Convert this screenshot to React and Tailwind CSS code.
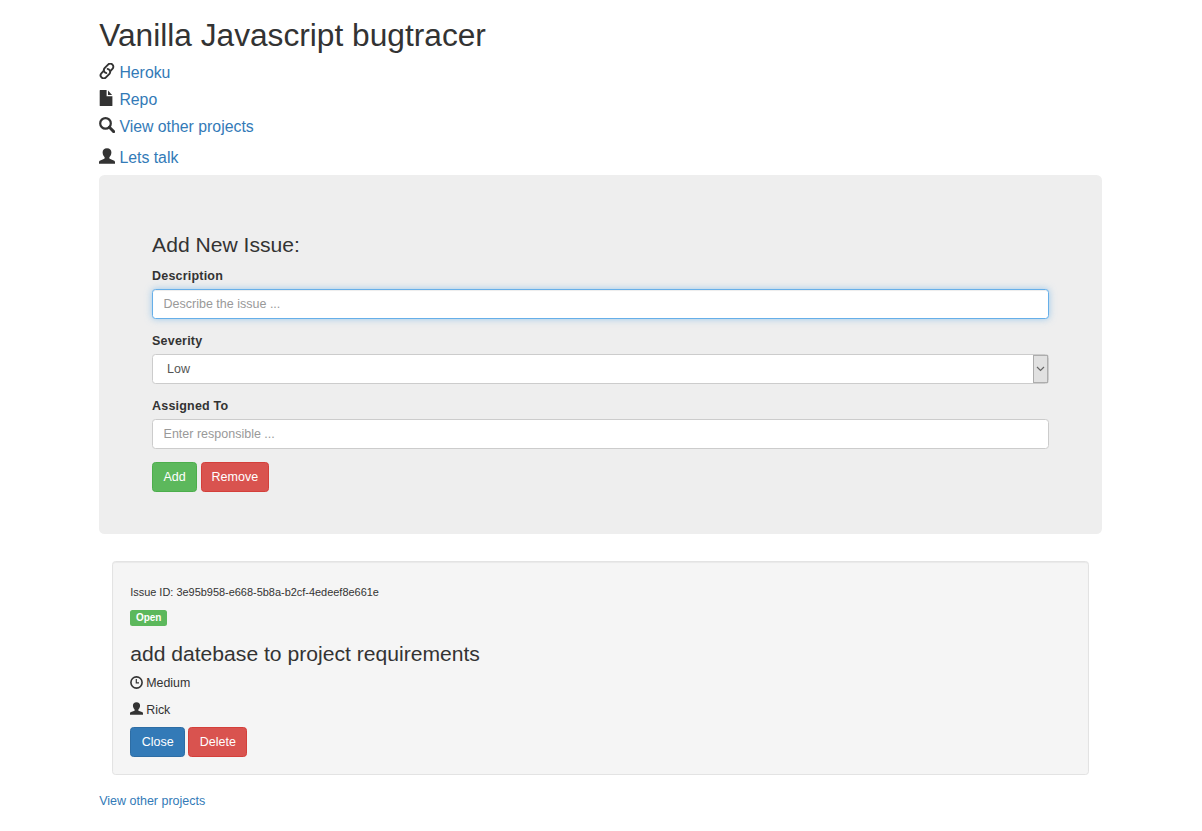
import React from 'react';

function LinkIcon() {
  return (
    <svg viewBox="0 0 16 16" className="h-4 w-4 shrink-0" fill="none" stroke="#333" strokeWidth="1.9">
      <g transform="rotate(-45 8 8)">
        <path d="M10.4 10.4H13.3A3.1 3.1 0 0 0 13.3 4.2H8.4A3.1 3.1 0 0 0 6.6 9.6" />
        <path d="M5.6 5.6H2.7A3.1 3.1 0 0 0 2.7 11.8H7.6A3.1 3.1 0 0 0 9.4 6.4" />
      </g>
    </svg>
  );
}

function FileIcon() {
  return (
    <svg viewBox="0 0 16 16" className="h-4 w-4 shrink-0" fill="#333">
      <path d="M1.2 0H7.6V6.2H13.4V15.4Q13.4 16 12.9 16H1.2Q.7 16 .7 15.4V.6Q.7 0 1.2 0Z" />
      <path d="M9 .6L13.1 5H9Z" />
    </svg>
  );
}

function SearchIcon() {
  return (
    <svg viewBox="0 0 16 16" className="h-4 w-4 shrink-0" fill="none" stroke="#333">
      <circle cx="6.5" cy="6.4" r="5.3" strokeWidth="2.2" />
      <path d="M10.4 10.3L14.7 14.6" strokeWidth="2.9" strokeLinecap="round" />
    </svg>
  );
}

function UserIcon({ className }) {
  return (
    <svg viewBox="0 0 16 16" className={className} fill="#333">
      <path d="M8 .2C10.9.2 12.4 1.9 12.4 4.4C12.4 5.7 12 6.9 11.5 7.8C11 8.7 10.3 9.1 10.3 9.8C10.3 10.6 10.6 10.8 11.3 11.1L14.7 12.4C15.7 12.8 16 13.4 16 14.3V15.8H0V14.3C0 13.4.3 12.8 1.3 12.4L4.7 11.1C5.4 10.8 5.7 10.6 5.7 9.8C5.7 9.1 5 8.7 4.5 7.8C4 6.9 3.6 5.7 3.6 4.4C3.6 1.9 5.1.2 8 .2Z" />
    </svg>
  );
}

function ClockIcon() {
  return (
    <svg viewBox="0 0 13 13" className="-mt-[2px] h-[13px] w-[13px] shrink-0" fill="none" stroke="#333">
      <circle cx="6.5" cy="6.5" r="5.6" strokeWidth="1.6" />
      <path d="M6.3 3V6.8H9" strokeWidth="1.2" />
    </svg>
  );
}

function TopLink({ icon, children, className = '' }) {
  return (
    <div className={`flex h-[27.3px] items-center gap-[4.2px] text-[15.84px] leading-[27.3px] text-[#337ab7] ${className}`}>
      <span className="-mt-[3px]">{icon}</span>
      <a href="#">{children}</a>
    </div>
  );
}

const label = 'block h-[17px] text-[12.5px] font-bold leading-[17px]';
const field = 'block h-[30px] w-full rounded-[3.5px] border bg-white px-[10.5px] text-[12.5px] text-[#555] placeholder-[#999] outline-none';
const btn = 'h-[30px] rounded-[3.5px] border text-center text-[12.5px] leading-none text-white';

export default function App() {
  return (
    <div className="h-[831px] overflow-hidden bg-white pl-[99.2px] pt-[17.5px] font-['Liberation_Sans',Arial,sans-serif] text-[12.4px] text-[#333]">
      <main className="w-[1003.2px]">
        <h1 className="h-[41px] text-[31.68px] leading-[35px]">Vanilla Javascript bugtracer</h1>
        <TopLink icon={<LinkIcon />}>Heroku</TopLink>
        <TopLink icon={<FileIcon />}>Repo</TopLink>
        <TopLink icon={<SearchIcon />}>View other projects</TopLink>
        <TopLink icon={<UserIcon className="h-4 w-4 shrink-0" />} className="mt-[3.5px]">Lets talk</TopLink>

        <section className="mt-[3.5px] h-[359.5px] rounded-[5.5px] bg-[#eee] px-[52.9px] pt-[58.5px]">
          <h3 className="h-6 text-[21.12px] leading-6">Add New Issue:</h3>
          <form className="mt-[10.5px]" onSubmit={(e) => e.preventDefault()}>
            <label className={`${label} tracking-[0.2px]`}>Description</label>
            <input
              className={`${field} mt-[4px] border-[#66afe9] shadow-[inset_0_1px_1px_rgba(0,0,0,.075),0_0_7px_rgba(102,175,233,.6)]`}
              placeholder="Describe the issue ..."
            />
            <label className={`${label} mt-[14px] tracking-[0.2px]`}>Severity</label>
            <div className="mt-[4px] flex h-[30px] items-center justify-between rounded-[3.5px] border border-[#ccc] bg-white pl-[14px] text-[12.5px] text-[#555]">
              <span className="pt-px">Low</span>
              <span className="flex h-[28px] w-[15px] items-center justify-center border border-[#adadad] bg-[#e1e1e1]">
                <svg viewBox="0 0 9 6" className="h-[6px] w-[9px] shrink-0" fill="none" stroke="#666" strokeWidth="1.2">
                  <path d="M1 1L4.5 4.5L8 1" />
                </svg>
              </span>
            </div>
            <label className={`${label} mt-[14px] tracking-[0.2px]`}>Assigned To</label>
            <input className={`${field} mt-[4px] border-[#ccc]`} placeholder="Enter responsible ..." />
            <div className="mt-[13px] flex gap-[3.5px]">
              <button className={`${btn} w-[45px] border-[#4cae4c] bg-[#5cb85c] pt-px`}>Add</button>
              <button className={`${btn} w-[68.5px] border-[#d43f3a] bg-[#d9534f] pt-px`}>Remove</button>
            </div>
          </form>
        </section>

        <section className="ml-[13px] mt-[27px] h-[213.5px] w-[977px] rounded-[3.5px] border border-[#e3e3e3] bg-[#f5f5f5] pl-[17px] pt-[24px] shadow-[inset_0_1px_1px_rgba(0,0,0,.05)]">
          <h6 className="h-3 text-[10.95px] leading-3">Issue ID: 3e95b958-e668-5b8a-b2cf-4edeef8e661e</h6>
          <p className="mt-[12px] flex h-4">
            <span className="h-4 w-[37px] rounded-[2.5px] bg-[#5cb85c] text-center text-[10px] font-bold leading-[15px] text-white">Open</span>
          </p>
          <h3 className="mt-[16px] h-6 text-[21.12px] leading-6">add datebase to project requirements</h3>
          <p className="mt-[9px] flex h-[17px] items-center gap-[3px] leading-[17px]">
            <ClockIcon />
            <span>Medium</span>
          </p>
          <p className="mt-[9.5px] flex h-[17px] items-center gap-[3px] leading-[17px]">
            <UserIcon className="-mt-[3px] h-[13px] w-[13px] shrink-0" />
            <span>Rick</span>
          </p>
          <div className="mt-[8.5px] flex gap-[3.2px]">
            <button className={`${btn} w-[55px] border-[#2e6da4] bg-[#337ab7]`}>Close</button>
            <button className={`${btn} w-[59px] border-[#d43f3a] bg-[#d9534f]`}>Delete</button>
          </div>
        </section>
        <a href="#" className="mt-[18.5px] block text-[12.5px] leading-[17px] text-[#337ab7]">View other projects</a>
      </main>
    </div>
  );
}
